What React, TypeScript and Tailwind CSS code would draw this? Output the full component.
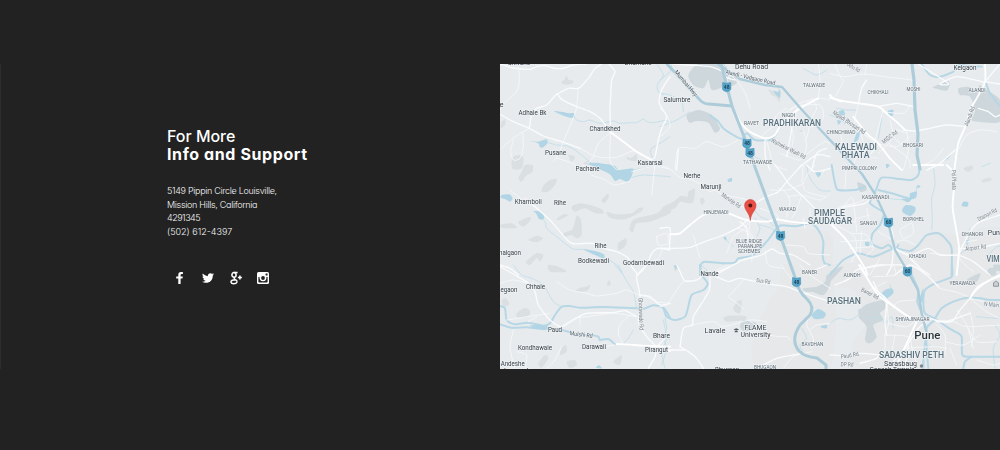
import React from "react";
import { FaTwitter } from "react-icons/fa";

type Tile = {
  x: number;
  y: number;
  urban?: string[];
  relief?: string[];
  park?: string[];
  lake?: string[];
  stream?: string[];
  river?: string[];
  lane?: string[];
  road?: string[];
  main?: string[];
};

// Each tile holds point lists at three units to the pixel.
const tiles: Tile[] = [
  {
    x: 500, y: 60,
    relief: ["185,65 192,60 200,48 207,60 220,62 215,72 190,73", "380,290 395,293 410,283 410,303 385,300", "250,312 265,302 280,315", "40,290 55,285 70,292 66,325 40,328 34,308", "2,190 14,178 16,192 4,205", "205,285 225,290 215,305"],
    lake: ["162,153 190,156 205,160 220,159 225,170 210,173 185,165", "92,242 115,245 140,238 142,250 130,262 120,262 115,250", "265,312 285,308 310,311 345,318 352,335 320,335"],
    stream: ["470,12 490,45 472,75 475,95 490,105", "220,168 230,180 250,185 270,180 300,190 340,183 360,190 390,188 410,188 430,177 440,185 460,188 490,182 510,184", "135,245 170,255 200,258 225,270 250,290 275,310", "510,230 480,250 455,265 452,280 462,300"],
    lane: ["55,12 58,60 50,95 12,130 0,150", "235,85 228,150 205,210 190,245 175,285 160,303", "68,220 70,260 60,295 40,300 32,275 40,240", "330,220 295,250 280,290 265,310", "332,212 330,300 350,330", "170,295 205,305 245,325", "240,265 290,290 350,292 400,272 430,285", "5,265 45,230 88,205"],
    road: ["0,12 40,24 90,28 110,20 135,17 165,25 190,25 220,15 260,12", "170,103 205,85 235,85 265,55 285,25 305,12", "0,163 40,185 88,205 130,228 185,245 240,265", "88,205 95,165 110,145 140,135 170,103 185,118 230,140 270,155 300,175 330,215", "327,12 345,35 335,60 332,110 330,150 332,212", "510,50 485,90 478,130 500,170 485,205 475,240 465,290 455,300"],
    main: ["330,215 370,245 410,275 455,300"],
  },
  {
    x: 660, y: 60,
    park: ["85,45 115,12 190,12 205,45 185,82 155,90 145,60 130,85 100,75", "80,165 115,150 155,165 180,205 165,218 145,188 110,183 88,188", "205,55 225,50 230,70 205,80"],
    relief: ["325,88 350,98 357,82 362,100 358,125 347,110 335,105"],
    lake: ["340,92 355,97 360,88 361,112 352,108"],
    stream: ["0,60 30,35 35,12", "0,200 50,180 90,155", "70,155 65,125 30,105 0,100", "420,213 430,213", "265,260 285,290 330,310", "430,25 470,45 500,30"],
    river: ["150,165 175,185 190,205 220,225 245,236 260,220 285,240 330,240 350,220"],
    lane: ["0,145 20,165 30,200 0,230", "45,330 55,265 105,265 140,245 190,260 235,240", "185,12 240,75 260,110 270,145", "365,165 420,130 475,115 510,120", "340,190 350,165 380,145", "380,175 405,140 480,135 490,175 460,200 410,185 410,145", "440,235 455,175 470,145 455,115", "430,290 470,260 495,245 510,250", "300,235 325,210 360,190 390,190 400,230 395,265", "475,12 480,60 475,115", "320,240 340,310 380,330", "430,210 440,260 420,300 360,280"],
    road: ["15,10 80,15 150,20 190,35", "180,12 195,50 225,60", "50,330 55,268", "400,170 392,225 380,290", "315,240 316,290 330,330", "455,330 470,280 500,265", "420,320 470,285 510,290"],
    main: ["217,138 240,185 270,215 315,235 345,225 365,190 420,145 475,115"],
  },
  {
    x: 830, y: 60,
    park: ["385,85 415,80 440,90 450,75 462,85 510,120 510,185 445,185 425,180 435,150 420,110 390,105", "308,82 335,70 350,60 360,72 350,92 325,88"],
    lake: ["173,153 190,150 188,167 177,167", "25,155 40,150 45,165 30,165", "80,220 90,217 84,240 72,245", "340,305 355,290 370,273 355,295", "22,180 34,184 25,194", "168,312 180,315 170,325"],
    stream: ["20,145 50,150 80,150", "0,165 35,180 45,195", "80,235 65,275 55,295", "455,320 480,310", "155,175 145,235"],
    river: ["275,12 300,45 330,50 370,35 385,15 420,18 455,20", "468,70 480,100 510,140"],
    lane: ["0,40 45,50 100,42 180,52 245,60 260,70", "15,12 30,50 40,65 15,110", "110,12 105,45", "85,130 75,200 130,245 125,280", "160,145 145,205 125,280", "160,155 220,160 240,135", "230,220 195,210 180,245 145,280", "115,290 150,255 200,260 240,230", "260,190 255,170", "220,330 235,270 230,210", "500,215 450,210 410,225 385,270", "270,320 310,300 340,265", "95,225 110,285 145,295", "175,250 235,295 240,325", "30,210 40,250 80,285 60,330", "180,180 195,235 220,255"],
    road: ["265,12 355,70 330,72 380,50 445,62 465,65 490,35 510,12", "85,130 95,85 110,60", "145,140 200,130 250,140", "465,65 510,72", "445,145 475,155 495,170 510,165", "220,210 255,213 300,205 350,195 405,200", "290,330 330,310 375,270"],
    main: ["0,113 50,125 100,132 145,140 175,165 205,190 225,210", "70,170 110,220 145,250 180,295 215,330", "465,12 465,65 440,115 420,150 408,195 385,250 373,330", "0,105 10,115 35,125"],
  },
  {
    x: 500, y: 165,
    relief: ["75,0 98,0 98,20 80,30 65,50 55,40 65,20", "130,62 150,45 170,42 165,60 145,80 125,80", "215,125 245,115 300,130 312,145 285,145 255,130 225,140", "320,140 350,148 395,145 415,130 430,128 420,142 375,163 330,158", "230,152 243,165 245,210 230,220 215,210 195,215 190,205 215,195 222,180", "395,170 410,160 470,145 490,125 510,120 510,145 450,170 410,175 400,200 388,195", "305,105 325,85 325,100 312,115", "170,162 190,148 205,150 190,160 175,165", "355,235 378,220 380,235 370,250 355,255", "5,178 35,175 50,188 15,190 0,185", "78,290 110,265 130,270 120,290 110,280 90,300", "55,170 90,155 90,168 70,185", "85,225 110,213 130,220 110,232", "145,300 175,305 200,320 150,320"],
    lake: ["285,0 335,0 355,15 400,12 385,50 360,42 345,48 330,28 305,15", "5,90 28,88 38,100 30,110 15,102 2,98", "100,138 125,140 133,160 118,163 108,145", "248,252 285,258 312,268 310,280 285,270"],
    stream: ["115,155 135,170 140,190 170,215 195,235 220,252 250,253", "310,275 350,300 365,320", "400,15 430,10 455,5 480,2", "395,38 430,30 510,35"],
    lane: ["30,75 75,110 115,130", "250,0 275,30 310,42 345,60 390,48", "465,0 455,90", "470,215 500,205 505,235 475,240 470,215", "395,20 440,8 470,5 510,12", "450,290 475,280 490,250 510,255"],
    road: ["75,100 110,130 150,165 180,200 215,235 275,235 310,250 350,260 385,280 395,305 415,330", "410,330 440,300 455,265 475,250 510,255", "0,300 30,310 55,330"],
  },
  {
    x: 660, y: 165,
    urban: ["370,195 510,205 510,330 450,330 385,270 350,235"],
    relief: ["85,80 105,72 100,110 85,115 60,110 45,130 20,135 10,125 40,110 62,93 82,95", "120,103 130,98 134,108 125,120"],
    lake: ["203,43 215,38 216,49 205,51", "190,218 197,215 200,227", "465,20 478,20 485,28 475,37", "43,302 54,300 48,312"],
    stream: ["280,130 300,155 325,165 340,185", "300,180 330,188 355,205", "440,0 450,40 480,75 510,78", "193,220 220,245", "285,160 300,190 290,215"],
    river: ["120,330 122,300 135,290 190,295 225,292 235,280 280,270 320,230 335,210 350,190 365,181 410,184 450,175 475,195 490,230 488,270 494,295 510,300"],
    lane: ["0,0 30,12 60,38 90,42 125,60 150,80 165,75 180,85 220,115 260,130", "190,90 235,98 285,110", "265,165 255,190 220,215 200,265", "270,165 268,200 280,220 275,290", "235,190 260,200 280,225", "355,70 375,80 390,110 380,155", "330,75 385,75 430,55", "425,90 410,135 395,160", "465,0 430,50 440,80 495,95", "300,130 350,150 355,165", "385,95 425,90 480,105 510,85", "430,0 425,50", "435,190 430,160", "450,130 450,170", "375,240 430,245 445,265 510,270", "480,35 495,15 510,12", "315,255 325,300 370,310", "100,210 110,245 120,280"],
    road: ["28,250 85,248 135,230 190,210 240,185 260,165", "0,190 30,190 28,250", "285,115 320,95 355,80 380,50 425,0", "385,55 365,25 345,0", "385,55 430,95 480,145 510,165", "0,250 28,250", "150,330 210,305 250,285 305,270 335,252 360,265 400,270 450,300", "240,170 260,190 265,235", "440,0 465,20 510,10"],
    main: ["30,208 60,205 90,180 130,150 165,143 205,145 230,155 260,165 320,170 350,163 390,170 450,175 510,170"],
  },
  {
    x: 830, y: 165,
    urban: ["180,225 260,240 310,200 380,210 510,190 510,330 130,330 80,270"],
    park: ["82,52 105,60 110,75 90,80", "475,312 495,308 498,330 475,330"],
    relief: ["400,10 425,2 430,10 415,20", "455,45 480,38 485,45 460,52"],
    lake: ["228,120 255,125 255,140 240,153 222,145 216,135", "240,85 260,80 258,98 245,103 235,112 215,102 238,98", "400,110 415,112 412,125 395,122", "105,232 117,231 118,242 107,242", "405,228 415,225 411,238", "262,60 272,64 263,70"],
    stream: ["310,0 315,60 305,100 307,160 305,195", "165,75 180,100 230,105", "475,270 500,245 510,245", "260,65 258,90", "420,190 410,250 390,265"],
    river: ["270,0 265,30 245,45 210,42 155,38 140,70 128,95 120,115 150,135 162,145 150,180 128,205 125,235 155,250 175,240 195,255 205,240", "145,75 185,85 235,100", "200,250 240,258 265,240 290,210 325,205 350,225 365,250 365,330", "0,330 40,285 85,265 130,275 190,250", "5,0 15,55 25,75 75,75 105,65"],
    lane: ["225,185 245,175 250,205 220,220 210,195 225,185", "50,0 45,70", "25,150 60,100 70,110 80,200", "0,150 30,125 75,115 115,100", "60,205 110,210 130,250 110,270", "15,180 70,210 80,250 65,290", "0,180 75,170", "30,230 120,225", "60,250 130,245", "145,200 180,220 190,215", "255,240 225,225 200,230", "195,255 245,280 280,320", "300,265 350,270 385,270", "385,270 395,290 430,320", "120,330 150,280", "390,265 400,235 440,225", "110,130 120,180", "80,160 120,150", "95,200 90,265"],
    road: ["130,90 105,115 50,125 0,140", "170,185 185,195 190,240 185,300 170,330", "195,250 240,270 295,250 330,270 385,270", "240,280 270,310 300,330", "385,270 430,290 480,330", "385,270 420,200 450,170 510,150", "390,250 440,250 510,235", "100,310 145,300 215,300"],
    main: ["0,175 45,220 80,270 105,310 112,330", "350,0 375,30 370,90 368,130 378,190 387,250 380,330", "250,0 340,0"],
  },
  {
    x: 500, y: 265,
    relief: ["225,78 240,68 260,65 270,58 265,75 245,80", "55,140 75,128 90,138 85,155 60,158 48,152", "185,248 198,240 200,260 180,270", "115,295 135,270 145,280 125,308", "200,290 225,285 230,300 210,310", "320,60 328,45 332,60", "340,290 365,270 360,300", "5,105 18,100 28,118 10,125"],
    lake: ["288,308 297,301 306,310", "90,182 120,180 142,184 138,195 112,193"],
    stream: ["40,0 65,30 95,40 130,60 160,110 185,125", "355,0 375,40 400,80 410,130", "240,180 240,210", "370,235 385,220 400,195", "490,165 500,220 485,260 495,310", "345,0 365,25", "500,215 510,225"],
    river: ["0,123 15,130 20,165 45,178 85,173 130,182 150,175 165,150 185,125 210,123 240,128 310,126 410,130 430,132 460,121 490,128 510,158", "0,178 35,188 80,187 105,190 145,190 205,200 220,210 270,210 295,215 300,225 325,222 345,238"],
    lane: ["20,165 55,160 80,155 115,150 150,145", "170,50 210,75 260,85 290,93 350,85 380,75 415,90 440,95 470,110 510,115", "110,155 85,170", "190,180 225,160 260,155 340,145 410,155", "240,155 240,215", "370,235 355,210 360,180 390,150", "40,195 30,250 45,310", "140,310 165,285 185,245", "315,245 345,240", "50,260 80,270 75,310", "0,55 40,45 80,55 110,75"],
    road: ["0,5 45,30 85,55 105,80 115,120 150,165 185,185 220,165 260,145 340,143 375,137 410,155", "430,15 410,35 418,80 422,130 415,170 440,215 470,245", "420,90 450,95 480,120 510,115", "470,245 465,275 445,310", "500,215 485,230 470,245"],
    main: ["350,237 390,239 430,242 510,245"],
  },
  {
    x: 660, y: 265,
    urban: ["300,310 275,245 295,180 320,120 360,60 370,0 510,0 510,310"],
    park: ["430,70 470,65 495,50 500,30 510,30 510,60 490,90 455,80 430,85", "250,165 270,168 290,175 285,190 255,200 240,185"],
    relief: ["220,130 230,110 245,105 245,120 240,145 225,140", "190,160 205,152 255,153 255,165 200,170", "40,0 55,10 45,18"],
    lake: ["455,150 475,132 497,145 490,160 465,162", "483,183 500,180 500,190 485,188"],
    stream: ["15,160 20,190 10,220 20,250 5,300", "130,30 140,15 120,0", "425,190 440,220 420,240 430,265"],
    river: ["120,0 125,30 143,55 130,75 95,90 85,125 75,155 45,165 20,155 10,130 0,123"],
    lane: ["0,125 20,120 40,90 70,50 100,48", "250,45 220,80 205,95 225,110 250,130", "95,180 160,170 190,185 270,165 320,170", "265,165 330,210 380,215 390,225", "450,150 440,180 460,220 455,250", "510,175 470,180 450,195", "365,0 385,30 425,75 445,85", "370,310 400,275 455,260", "420,0 450,30 510,70", "170,15 205,0"],
    road: ["50,0 60,20 75,48 110,45 130,30", "150,35 148,75 125,115 100,155 97,180 70,190 60,245", "60,245 85,260 110,280 130,310", "145,30 175,38 205,50 240,40 310,55 380,65 420,80 510,110", "0,255 25,255 75,255", "310,300 350,280 400,270 430,265", "170,28 210,5", "500,0 465,15"],
    main: ["0,250 30,258"],
  },
  {
    x: 830, y: 265,
    urban: ["0,0 510,0 510,310 100,310 70,230 105,180 75,80 0,60"],
    park: ["95,130 110,118 160,105 165,130 150,145 160,165 130,180 140,215 120,235 105,225 110,185 88,160 85,135", "40,5 5,45 0,50 0,20", "410,45 450,25 440,50", "490,0 510,0 510,18 495,15"],
    lake: ["150,92 165,75 185,70 190,85 165,105 155,103", "268,105 280,70 278,110"],
    stream: ["115,160 150,158 165,175 185,155 190,190", "440,155 500,160 510,155", "300,240 280,260 285,310", "180,60 185,80 160,95", "495,180 510,210 490,250 495,310", "0,175 25,160 60,165 85,150"],
    river: ["365,0 365,35 315,55 285,75 280,110 285,145 315,160", "315,160 350,185 375,200 395,215 397,270 425,275 510,275", "510,105 480,105 450,100 410,98 370,110 335,130 315,160", "245,30 265,75 262,110 275,145 290,200 285,235 278,310", "315,165 290,190 290,250 295,310", "425,275 405,290 400,310"],
    lane: ["170,105 175,175 165,210 165,250 150,265", "175,175 230,185 265,160", "170,210 235,215 245,245", "190,130 205,110 255,105", "190,0 195,30 130,35", "300,40 330,70 375,80 415,95", "420,100 470,140 510,160", "320,180 345,210 345,270", "415,190 440,230 500,230", "420,140 430,190 425,245", "345,230 400,240 450,210", "230,250 310,245 350,250", "440,285 490,300 510,295", "315,165 370,170 410,185 510,180", "360,250 380,300", "245,245 260,300", "380,135 410,180 430,250", "110,80 150,60 170,50", "195,210 185,265", "510,120 420,100"],
    road: ["0,100 40,105", "85,0 125,60 170,105 230,150 260,165 300,160", "160,0 80,15 60,40 15,60", "195,30 240,0 290,30 325,65", "0,270 50,272 95,265 150,270 190,275", "90,295 140,280 150,265", "130,50 145,80 170,105 165,170 170,210", "190,290 225,250 265,190 290,170", "320,170 365,170 390,135 420,100 440,75 480,45 510,35", "300,160 345,170 420,145", "225,310 235,240"],
    main: ["90,0 140,85 185,120 245,160 300,160", "260,170 230,235 200,300", "420,100 445,65 510,30"],
  },
];

function trace(points: string, closed = false) {
  const p = points.split(" ").map((v) => v.split(",").map(Number));
  const n = p.length;
  const at = (i: number) => (closed ? p[(i + n) % n] : p[Math.max(0, Math.min(n - 1, i))]);
  let d = `M${p[0]}`;
  for (let i = 0; i < (closed ? n : n - 1); i++) {
    const [a, b, c, e] = [at(i - 1), at(i), at(i + 1), at(i + 2)];
    d += `C${b[0] + (c[0] - a[0]) / 8},${b[1] + (c[1] - a[1]) / 8} ${c[0] - (e[0] - b[0]) / 8},${c[1] - (e[1] - b[1]) / 8} ${c[0]},${c[1]}`;
  }
  return closed ? d + "Z" : d;
}

type LayerKey = Exclude<keyof Tile, "x" | "y">;

function Layer({ name, color, width = 0, opacity = 1 }: { name: LayerKey; color: string; width?: number; opacity?: number }) {
  const line = width > 0;
  return (
    <g fill={line ? "none" : color} stroke={line ? color : "none"} strokeWidth={width} strokeLinecap="round" strokeLinejoin="round" opacity={opacity}>
      {tiles.map((t) => (
        <g key={`${t.x}-${t.y}`} transform={`translate(${t.x} ${t.y}) scale(.33333)`}>
          {(t[name] ?? []).map((s, i) => <path key={i} d={trace(s, !line)} />)}
        </g>
      ))}
    </g>
  );
}

// text, centre x, baseline, width, rotation, dark
type Label = [string, number, number, number, number?, boolean?];

const towns: Label[] = [
  ["Shivane", 519, 64.5, 22], ["Dhamane", 638, 64.5, 27],
  ["Dehu Road", 751.5, 69, 33], ["Salumbre", 677, 101.7, 27], ["Kelgaon", 965, 70, 23],
  ["Adhale Bk", 532.5, 115, 28], ["Chandkhed", 605, 131.4, 31], ["Pusane", 555.5, 155.2, 21],
  ["Kasarsai", 650, 164.5, 25], ["Pachane", 587.5, 170.7, 24], ["Khamboli", 528.3, 204, 27],
  ["Rihe", 560, 204.5, 12], ["Rihe", 600.5, 248.2, 12], ["Bodkewadi", 593.5, 263.4, 31],
  ["Godambewadi", 643.5, 265.4, 41], ["Nerhe", 692, 178.2, 17], ["Marunji", 711, 189.2, 21],
  ["Nande", 709.5, 276.4, 18], ["nalgaon", 510, 255.2, 22], ["Chhale", 535.5, 288.7, 19],
  ["egaon", 509, 292.2, 17], ["Paud", 555, 331.5, 14], ["Kondhawale", 535, 349.7, 34],
  ["Darawali", 594, 349.2, 24], ["Andeshe", 512.7, 365.9, 24], ["Bhare", 661.5, 338.2, 17],
  ["Pirangut", 656.5, 352.2, 23], ["Lavale", 715, 333.2, 21], ["FLAME", 755.5, 329.8, 22],
  ["University", 755.5, 336.8, 30], ["Sarasbaug", 900.5, 366, 33], ["Ganesh Temple", 892, 372.4, 45],
  ["Pun", 993.8, 235.2, 12], ["Lonavala", 518, 372.6, 28], ["e", 501.5, 107, 4], ["Bhugaon", 727, 372.2, 24],
];
const suburbs: Label[] = [
  ["TALWADE", 814, 86.5, 22], ["CHIKHALI", 878, 94, 21], ["MOSHI", 913.5, 91, 14],
  ["ALANDI", 977, 91.5, 17], ["NIGDI", 788.5, 116.5, 13], ["RAVET", 751.5, 124.5, 15],
  ["CHINCHWAD", 841, 134.2, 29], ["BHOSARI", 913, 146.5, 20], ["TATHAWADE", 757.5, 164, 29],
  ["PIMPRI COLONY", 859.5, 170.3, 35], ["KASARWADI", 875.5, 199.2, 27], ["WAKAD", 787.5, 211, 17],
  ["HINJEWADI", 716, 213.5, 25], ["SANGVI", 868.5, 224.7, 17], ["BOPKHEL", 913.5, 221.2, 21],
  ["DHANORI", 972.5, 235.5, 21], ["BLUE RIDGE", 749, 243.4, 26], ["PARANJPE", 750, 248.3, 24],
  ["SCHEMES", 749, 253.2, 22], ["KHADKI", 917.5, 257.7, 17], ["BANER", 809.5, 273.9, 15],
  ["AUNDH", 852, 276.7, 17], ["YERAWADA", 962.5, 285, 26], ["SHIVAJINAGAR", 912.5, 320.7, 34],
  ["BAVDHAN", 812.5, 345.7, 22], ["BHUGAON", 765, 368.6, 22],
];
const districts: Label[] = [
  ["PRADHIKARAN", 792, 126.2, 58], ["KALEWADI", 856, 150.2, 42], ["PHATA", 855.5, 158.2, 28],
  ["PIMPLE", 829.5, 216.2, 31], ["SAUDAGAR", 830, 224.2, 44], ["PASHAN", 844, 304, 34],
  ["SADASHIV PETH", 911.5, 357.8, 65], ["VIM", 993, 261.7, 13],
];
const streets: Label[] = [
  ["Mumbai Hwy", 684.5, 84.5, 32, 50, true], ["Alandi - Vadgaon Road", 750, 79.5, 51, 13, true],
  ["Walhekar Wadi Rd", 787.5, 150.5, 38, 27], ["Nigadi Bhosari Rd", 848, 124, 38, 34],
  ["MIDC Rd", 891, 138.5, 18, -37], ["Alandi Rd", 971.5, 117, 20, -70],
  ["Marunje Rd", 730, 202, 22, 35], ["Pd Phata", 952, 180, 20, 88],
  ["Dhanori Rd", 988, 216.5, 21, -27], ["Airport Rd", 976, 249.7, 21, -7],
  ["Sus Rd", 763, 283, 14, 9], ["Baner Rd", 869, 295.3, 19, 27], ["N Main", 991.5, 306.5, 15, 5],
  ["Ghotawade Rd", 639, 314, 32, 88], ["Mulshi Rd", 581, 336.5, 23, 7, true],
  ["Paud Rd", 850, 357.3, 18, -10], ["DP Rd", 847, 366.4, 13, 2], ["Dehu Rd", 852.5, 69, 14, 30],
];

function Labels({ items, size, color, weight = 400, halo = 1.4 }: { items: Label[]; size: number; color: string; weight?: number; halo?: number }) {
  return (
    <g fill={color} fontSize={size} fontWeight={weight} stroke="#eff2f4" strokeWidth={halo} paintOrder="stroke" textAnchor="middle">
      {items.map(([text, x, y, w, turn = 0, dark]) => (
        <text key={`${text}${y}`} x={x} y={y} fill={dark ? "#4c5c66" : color} textLength={w} lengthAdjust="spacingAndGlyphs" transform={`rotate(${turn} ${x} ${y})`}>{text}</text>
      ))}
    </g>
  );
}

const shields: [number, number, string][] = [
  [726.7, 87, "48"], [747, 143.5, "48"], [750, 152.7, "48"], [780.5, 235.7, "48"],
  [888.5, 222.5, "60"], [907.5, 271.5, "60"], [796.5, 282, "48"],
];

function CityMap() {
  return (
    <svg viewBox="500 64 500 305" className="block h-[305px] w-[500px] shrink-0 bg-[#e7ebee] font-[Roboto,sans-serif]" role="img">
      <Layer name="urban" color="#e6e6e8" opacity={0.6} />
      <Layer name="relief" color="#d8dcdf" opacity={0.8} />
      <Layer name="park" color="#cdd7dc" />
      <Layer name="stream" color="#c0dde9" width={2.6} />
      <Layer name="river" color="#b7d7e5" width={6} />
      <Layer name="lake" color="#b1d5e5" />
      <Layer name="lane" color="#f4f6f7" width={3} />
      <Layer name="road" color="#fafbfc" width={4} />
      <Layer name="main" color="#ffffff" width={5.5} />
      <g fill="none" stroke="#acccda" strokeLinecap="round" strokeLinejoin="round">
        <path strokeWidth="2.8" d="M667 64 681 79 699 99Q703 104 709 104L732 106" />
        <path strokeWidth="3" d="M721 64 727 87 732 106 741 129 747 144 756 170 780 235 796 280Q798 291 807 299 815 307 810 315L800 325Q790 340 799 351 805 357 817 358L826 365V369" />
        <path strokeWidth="2.4" d="M718 64 740 79 765 85 782 87 802 110 830 140 862 174 875 194 888 222 895 250 908 272 918 290 922 315 928 338" />
        <path strokeWidth="3.2" d="M912 64 914 80 915 110 918 134 917 155 920 169" />
      </g>
      <Labels items={streets} size={6} color="#78838a" halo={1} />
      <Labels items={suburbs} size={5.5} color="#5d6b74" halo={1.2} />
      <Labels items={towns} size={7.3} color="#38424a" />
      <Labels items={districts} size={8.4} color="#5a717d" weight={500} />
      <Labels items={[["Pune", 927.3, 339.2, 26]]} size={11.5} color="#2c353b" weight={500} halo={2} />
      {shields.map(([x, y, n]) => (
        <g key={`${x}`}>
          <path d={`M${x - 4} ${y - 4.4}Q${x} ${y - 3} ${x + 4} ${y - 4.4}L${x + 4.2} ${y + 2}Q${x + 4} ${y + 3.8} ${x} ${y + 4.8}Q${x - 4} ${y + 3.8} ${x - 4.2} ${y + 2}Z`} fill="#55a3c9" stroke="#4590b5" strokeWidth=".6" />
          <text x={x} y={y + 1.8} fontSize="5" fontWeight="700" textAnchor="middle" fill="#1c4458">{n}</text>
        </g>
      ))}
      <path d="m733.5 329.5 2.8-1.3 2.8 1.3-2.8 1.3ZM734.7 331v1.2h3V331" fill="#56616a" />
      <path d="M993.5 282.8 996 281l2.5 1.8v3.5h-5Z" fill="#f3f5f6" stroke="#6b777f" strokeWidth=".7" />
      <path d="M994 283h4m-3 1v2m2-2v2" stroke="#6b777f" strokeWidth=".6" />
      <circle cx="921.5" cy="366" r="1.7" fill="#7b868d" />
      <path d="M750.3 220.5C749.8 212.8 744.6 210.8 744.6 205.2a5.7 5.7 0 0 1 11.4 0c0 5.6-5.2 7.6-5.7 15.3Z" fill="#ea4f45" stroke="#c5453d" strokeWidth=".6" />
      <circle cx="750.3" cy="205.6" r="2" fill="#571512" />
    </svg>
  );
}

function Facebook() {
  return (
    <svg viewBox="0 0 7 12" className="h-[12px] w-[7px]" fill="#fff">
      <path d="M6.9.1v2H5.7q-1.1 0-1.1 1v1.3h2.2l-.3 2.1H4.6V12H2.3V6.5H.2V4.4h2.1V2.7Q2.3 0 5 0q1.200 0 1.900.1Z" />
    </svg>
  );
}

function GooglePlus() {
  return (
    <svg viewBox="0 0 12 14" className="h-[14px] w-[12px]" fill="none" stroke="#fff">
      <ellipse cx="4" cy="3.900" rx="2.100" ry="2.300" strokeWidth="1.500" />
      <path d="M3.800 1.500h3.800M4.800 6.300q-1.400 1 .3 2Q7.400 9.500 7 11q-.7 1.800-3.200 1.800T.9 11q0-2 4.600-2.200" strokeWidth="1.400" />
      <path d="M7.900 6.500h4M9.900 4.500v4" strokeWidth="1.500" />
    </svg>
  );
}

function Instagram() {
  return (
    <svg viewBox="0 0 12 12" className="h-[12px] w-[12px]">
      <rect width="12" height="12" rx="1.5" fill="#fff" />
      <path d="M1.4 5v4.8q0 .8.8.8h7.6q.8 0 .8-.8V5H9.4a3.5 3.5 0 1 1-6.800 0Z" fill="#222" />
      <circle cx="6" cy="6" r="3" fill="#fff" />
      <circle cx="6" cy="6" r="1.900" fill="#222" />
      <rect x="8.600" y="1.400" width="2" height="2" rx=".3" fill="#222" />
    </svg>
  );
}

export default function App() {
  return (
    <main className="flex h-[450px] w-[1000px] items-center overflow-hidden bg-[#222222] pb-[17px] text-white">
      <section className="flex h-[305px] w-[500px] shrink-0 flex-col border-l border-[#2d2d2d] pt-[63px] pl-[166px] font-[Inter,sans-serif] whitespace-nowrap [font-feature-settings:'cv11']">
        <h2 className="text-[16px] leading-[18px]">
          <span className="block font-medium tracking-[-0.02px]">For More</span>
          <span className="block font-bold tracking-[0.6px]">Info and Support</span>
        </h2>
        <address className="mt-[21px] text-[9px] leading-[13.7px] font-light text-[#f8f8f8] not-italic">
          <span className="block tracking-[-0.31px]">5149 Pippin Circle Louisville,</span>
          <span className="block tracking-[-0.31px]">Mission Hills, California</span>
          <span className="block tracking-[-0.5px]">4291345</span>
          <span className="block tracking-[0px]">(502) 612-4397</span>
        </address>
        <nav className="mt-[32px] flex h-[14px] items-center">
          <span className="flex w-[25px] justify-center"><Facebook /></span>
          <span className="flex w-[31px] justify-center"><FaTwitter className="h-[12px] w-[12px]" /></span>
          <span className="flex w-[26px] justify-center"><GooglePlus /></span>
          <span className="flex w-[28px] justify-center"><Instagram /></span>
        </nav>
      </section>
      <CityMap />
    </main>
  );
}
